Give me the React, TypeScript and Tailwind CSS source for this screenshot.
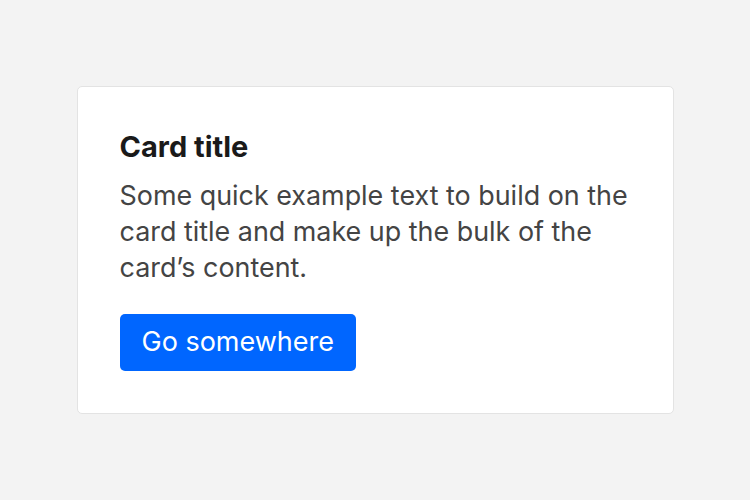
export default function App() {
  return (
    <div className="flex h-[500px] w-[750px] items-center justify-center bg-[#f3f3f3] font-['Inter',sans-serif]">
      <div className="w-[597px] rounded-[5px] border border-[#e3e3e3] bg-white px-[42px] pb-[42px] pt-[43px]">
        <h5 className="text-[29px] font-bold leading-[34px] text-[#1a1a1a]">Card title</h5>
        <p className="mt-[13px] text-[26.9px] leading-[36px] text-[#444444]">
          Some quick example text to build on the card title and make up the bulk of the card’s content.
        </p>
        <button className="mt-[29px] flex h-[57px] items-center rounded-[5px] bg-[#0066ff] px-[22px] text-[27px] text-white">
          Go somewhere
        </button>
      </div>
    </div>
  );
}
